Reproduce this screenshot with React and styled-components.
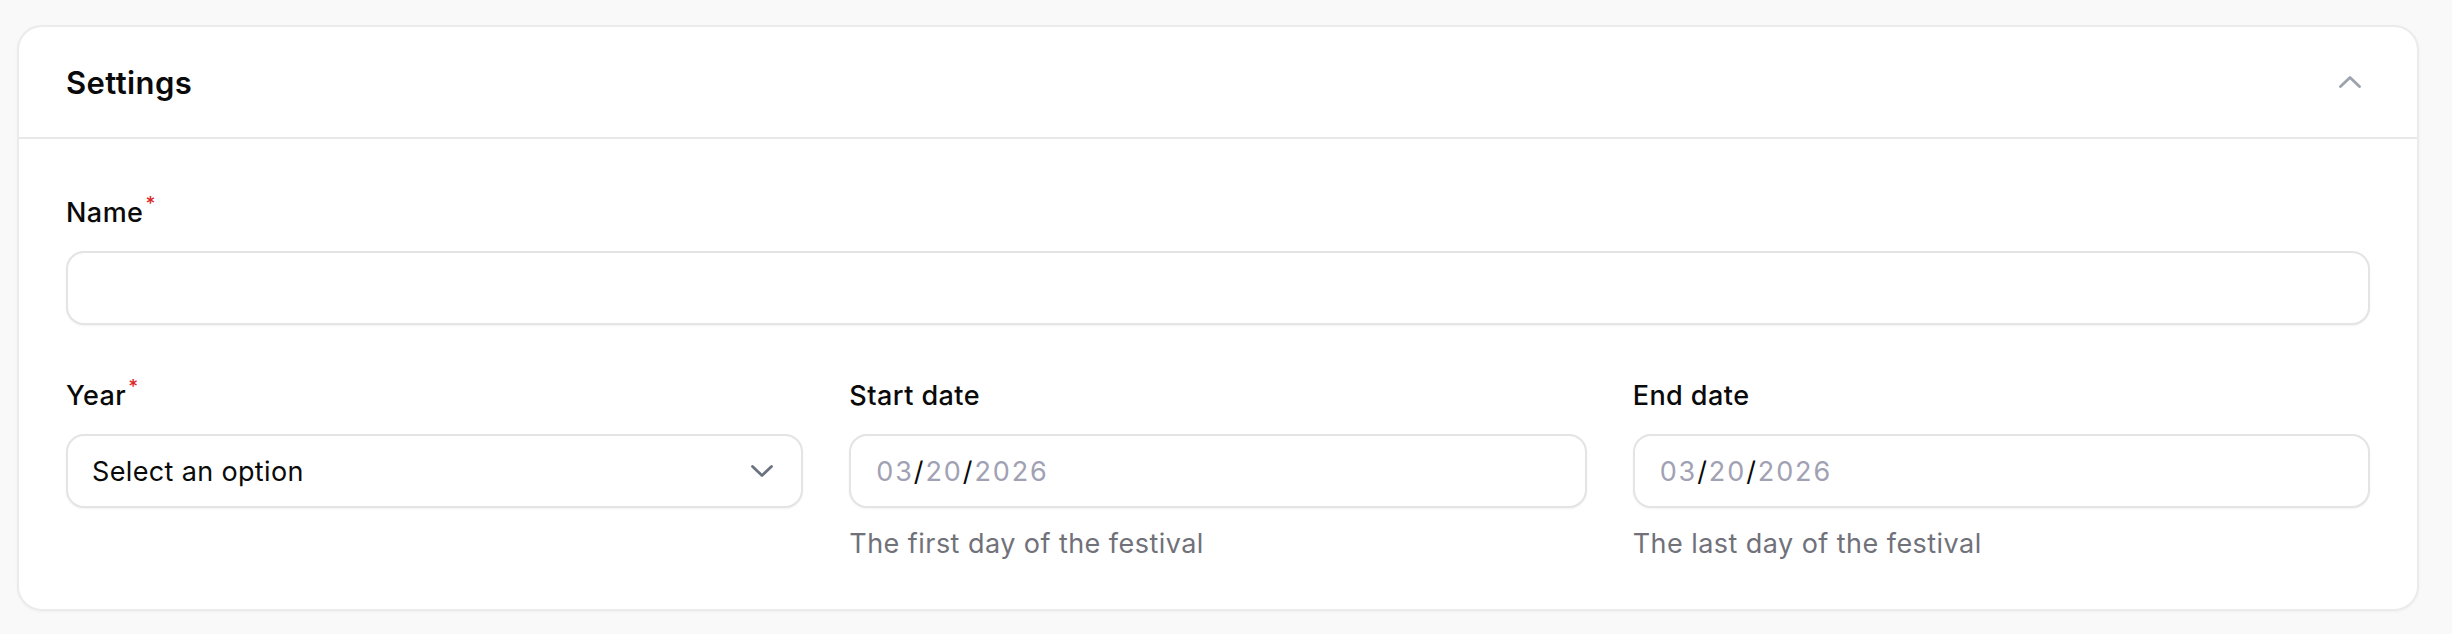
import React from 'react';
import styled, { createGlobalStyle } from 'styled-components';

const GlobalStyle = createGlobalStyle`
  html, body {
    margin: 0;
    padding: 0;
    background: #f9f9f9;
    font-family: Inter, "Noto Sans", "Liberation Sans", sans-serif;
    color: #0a0a0a;
  }
  * {
    box-sizing: border-box;
  }
`;

const Page = styled.div`
  padding: 25px 33px 22px 17px;
`;

const Card = styled.section`
  background: #fff;
  border: 2px solid #ebebeb;
  border-radius: 25px;
  box-shadow: 0 1px 3px rgba(0, 0, 0, 0.04);
  overflow: hidden;
`;

const Header = styled.header`
  height: 112px;
  padding: 0 47px;
  display: flex;
  align-items: center;
  justify-content: space-between;
  border-bottom: 2px solid #e8e8e8;
`;

const Title = styled.h2`
  margin: 0;
  font-size: 31px;
  font-weight: 600;
  letter-spacing: 0.4px;
  color: #0a0a0a;
`;

const IconButton = styled.button`
  width: 40px;
  height: 40px;
  border: 0;
  padding: 0;
  background: none;
  display: flex;
  align-items: center;
  justify-content: center;
  color: #9ca3af;
  cursor: pointer;
`;

const Body = styled.div`
  padding: 55px 47px 47px;
  display: flex;
  flex-direction: column;
  gap: 52px;
`;

const Row = styled.div`
  display: grid;
  grid-template-columns: ${(p) => (p.$cols ? `repeat(${p.$cols}, 1fr)` : '1fr')};
  column-gap: 46px;
`;

const Field = styled.div`
  display: flex;
  flex-direction: column;
`;

const Label = styled.label`
  font-size: 27px;
  line-height: 37px;
  font-weight: 500;
  letter-spacing: 0.45px;
  color: #0a0a0a;
  margin-bottom: 20px;
`;

const Required = styled.sup`
  color: #dc2626;
  font-size: 19px;
  line-height: 0;
  margin-left: 2px;
  position: relative;
  top: -2px;
`;

const Control = styled.div`
  height: 74px;
  border: 2px solid #e4e4e4;
  border-radius: 18px;
  background: #fff;
  box-shadow: 0 1px 2px rgba(0, 0, 0, 0.05);
  display: flex;
  align-items: center;
  justify-content: space-between;
  padding: 0 28px 0 24px;
  font-size: 27px;
  letter-spacing: 0.35px;
  color: #0a0a0a;
`;

const TextInput = styled.input`
  width: 100%;
  height: 100%;
  border: 0;
  outline: none;
  background: transparent;
  font: inherit;
`;

const Segment = styled.span`
  color: ${(p) => (p.$sep ? '#0a0a0a' : '#a1a1b4')};
`;

const DateText = styled.div`
  padding-left: 1px;
  letter-spacing: 1.9px;
`;

const Help = styled.p`
  margin: 17px 0 0;
  font-size: 27px;
  line-height: 37px;
  letter-spacing: 0.45px;
  color: #71717a;
`;

const Chevron = ({ up, color }) => (
  <svg width="22" height="12" viewBox="0 0 22 12" fill="none">
    <polyline
      points={up ? '1.5,10.5 11,1.5 20.5,10.5' : '1.5,1.5 11,10.5 20.5,1.5'}
      stroke={color}
      strokeWidth="2.8"
      strokeLinecap="round"
      strokeLinejoin="round"
    />
  </svg>
);

const DateInput = ({ month, day, year }) => (
  <Control>
    <DateText>
      <Segment>{month}</Segment>
      <Segment $sep>/</Segment>
      <Segment>{day}</Segment>
      <Segment $sep>/</Segment>
      <Segment>{year}</Segment>
    </DateText>
  </Control>
);

export default function App() {
  return (
    <>
      <GlobalStyle />
      <Page>
        <Card>
          <Header>
            <Title>Settings</Title>
            <IconButton aria-label="Collapse">
              <Chevron up color="#9ca3af" />
            </IconButton>
          </Header>
          <Body>
            <Row>
              <Field>
                <Label>
                  Name<Required>*</Required>
                </Label>
                <Control>
                  <TextInput />
                </Control>
              </Field>
            </Row>
            <Row $cols={3}>
              <Field>
                <Label>
                  Year<Required>*</Required>
                </Label>
                <Control>
                  <span>Select an option</span>
                  <Chevron color="#6b7280" />
                </Control>
              </Field>
              <Field>
                <Label>Start date</Label>
                <DateInput month="03" day="20" year="2026" />
                <Help>The first day of the festival</Help>
              </Field>
              <Field>
                <Label>End date</Label>
                <DateInput month="03" day="20" year="2026" />
                <Help>The last day of the festival</Help>
              </Field>
            </Row>
          </Body>
        </Card>
      </Page>
    </>
  );
}
